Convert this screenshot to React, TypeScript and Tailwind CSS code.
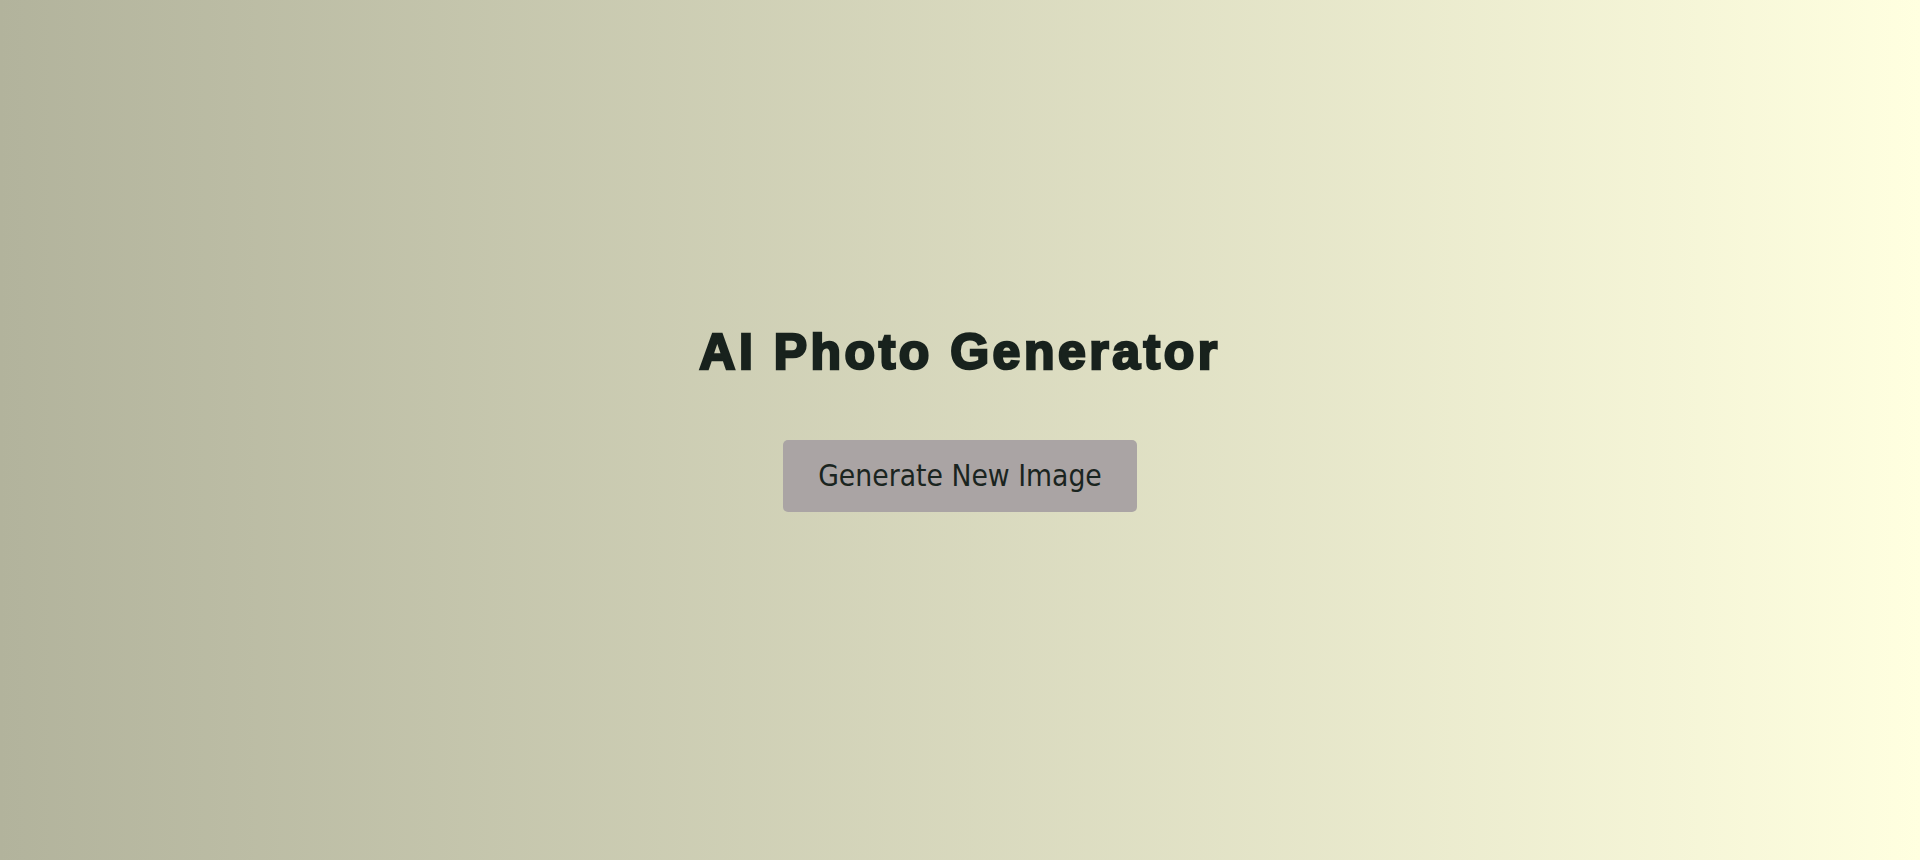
export default function App() {
  return (
    <div className="flex h-[860px] w-full flex-col items-center justify-center bg-gradient-to-r from-[#b2b39c] to-[#ffffe0] pb-[26px]">
      <h1 className="font-['Liberation_Sans',Arial,sans-serif] text-[50px] font-black leading-[60px] tracking-[3.5px] text-[#18221d] [-webkit-text-stroke:2.5px_#18221d]">
        AI Photo Generator
      </h1>
      <button className="mt-[58px] flex h-[72px] w-[354px] items-center justify-center rounded-[5px] bg-[#aaa4a4] font-['DejaVu_Sans_Condensed','DejaVu_Sans',sans-serif] text-[29.7px] text-[#1a2420]">
        Generate New Image
      </button>
    </div>
  );
}
